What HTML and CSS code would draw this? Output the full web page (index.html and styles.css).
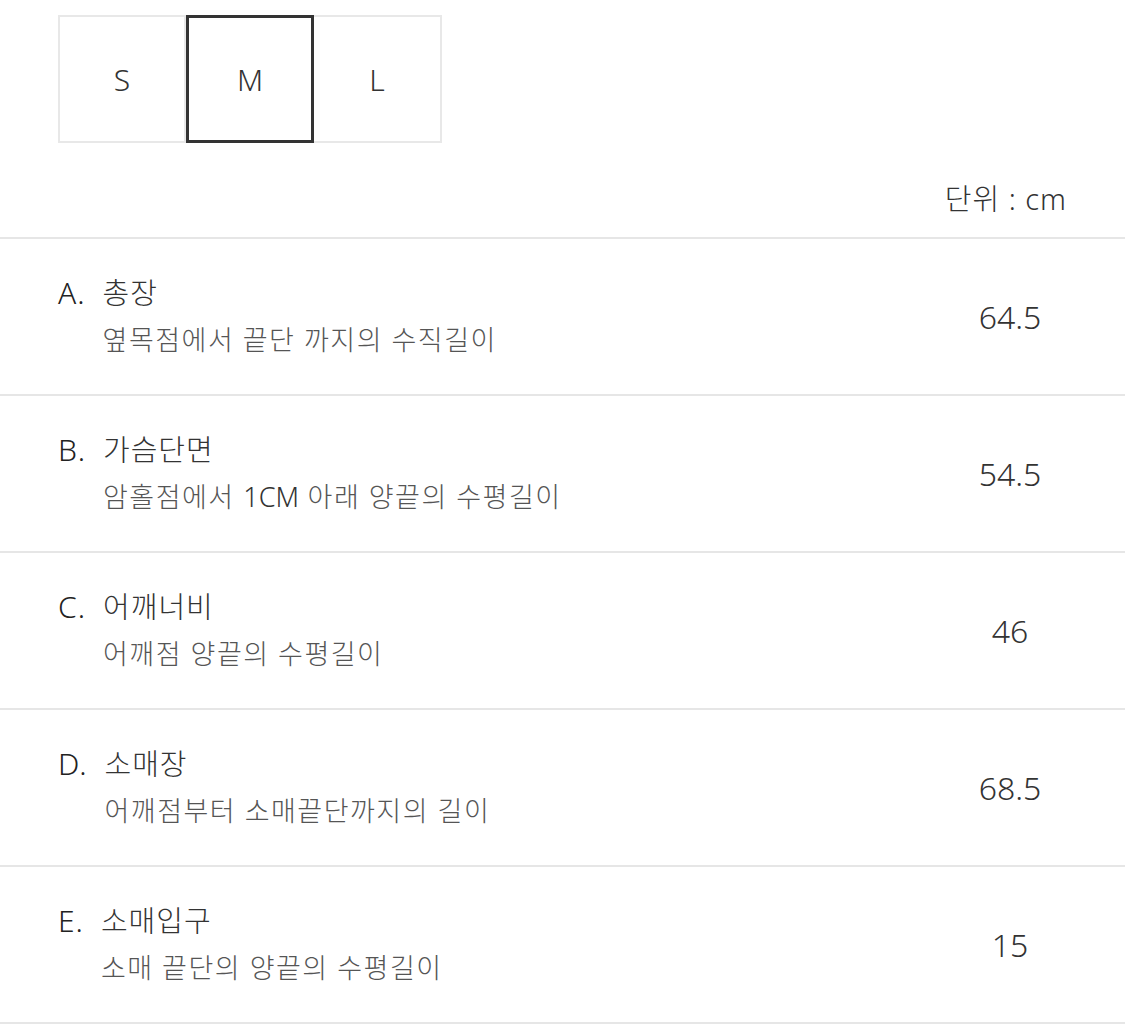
FILE: index.html
```html
<!DOCTYPE html>
<html lang="ko">
<head>
<meta charset="utf-8">
<link rel="stylesheet" href="styles.css">
</head>
<body>
<div class="sizes">
  <div class="size">S</div>
  <div class="size active">M</div>
  <div class="size">L</div>
</div>
<div class="unit">단위 : cm</div>
<div class="table">
  <div class="row">
    <div class="info">
      <span class="letter">A.</span>
      <div class="title">총장</div>
      <div class="desc">옆목점에서 끝단 까지의 수직길이</div>
    </div>
    <div class="value">64.5</div>
  </div>
  <div class="row">
    <div class="info">
      <span class="letter">B.</span>
      <div class="title">가슴단면</div>
      <div class="desc">암홀점에서 <span class="latin">1CM</span> 아래 양끝의 수평길이</div>
    </div>
    <div class="value">54.5</div>
  </div>
  <div class="row">
    <div class="info">
      <span class="letter">C.</span>
      <div class="title">어깨너비</div>
      <div class="desc">어깨점 양끝의 수평길이</div>
    </div>
    <div class="value">46</div>
  </div>
  <div class="row">
    <div class="info">
      <span class="letter">D.</span>
      <div class="title">소매장</div>
      <div class="desc">어깨점부터 소매끝단까지의 길이</div>
    </div>
    <div class="value">68.5</div>
  </div>
  <div class="row">
    <div class="info">
      <span class="letter">E.</span>
      <div class="title">소매입구</div>
      <div class="desc">소매 끝단의 양끝의 수평길이</div>
    </div>
    <div class="value">15</div>
  </div>
</div>
</body>
</html>
```
FILE: styles.css
```css
html, body {
  margin: 0;
  padding: 0;
  background: #fff;
}
body {
  font-family: "Noto Sans", "Noto Sans CJK KR", sans-serif;
  color: #333;
  width: 1125px;
}
.sizes {
  display: flex;
  padding: 15px 0 0 58px;
}
.size {
  width: 128px;
  height: 128px;
  box-sizing: border-box;
  border: 2px solid #e8e8e8;
  display: flex;
  align-items: center;
  justify-content: center;
  font-size: 30px;
  font-weight: 300;
  color: #333;
}
.size + .size {
  border-left: none;
}
.size.active {
  border: 3px solid #333;
}
.size.active + .size {
  border-left: none;
}
.unit {
  text-align: right;
  padding: 26px 58px 0 0;
  height: 94px;
  box-sizing: border-box;
  font-size: 29px;
  letter-spacing: 1px;
  line-height: 60px;
  font-weight: 300;
  color: #333;
}
.table {
  border-top: 2px solid #e6e6e6;
}
.row {
  display: flex;
  align-items: center;
  height: 157px;
  box-sizing: border-box;
  border-bottom: 2px solid #e6e6e6;
  padding-left: 58px;
}
.info {
  flex: 1;
  display: grid;
  grid-template-columns: auto 1fr;
  column-gap: 17px;
}
.letter {
  grid-row: 1;
  grid-column: 1;
  font-size: 30px;
  line-height: 46px;
  letter-spacing: 1px;
  font-weight: 300;
  color: #222;
}
.title {
  grid-row: 1;
  grid-column: 2;
  font-size: 29px;
  line-height: 46px;
  letter-spacing: 1px;
  font-weight: 300;
  color: #333;
}
.desc {
  grid-row: 2;
  grid-column: 2;
  font-size: 27px;
  letter-spacing: 1.5px;
  line-height: 48px;
  font-weight: 300;
  color: #555;
}
.latin {
  color: #333;
  letter-spacing: 0;
}
.value {
  width: 130px;
  margin-right: 50px;
  text-align: center;
  font-size: 32px;
  font-weight: 300;
  color: #333;
}
```
